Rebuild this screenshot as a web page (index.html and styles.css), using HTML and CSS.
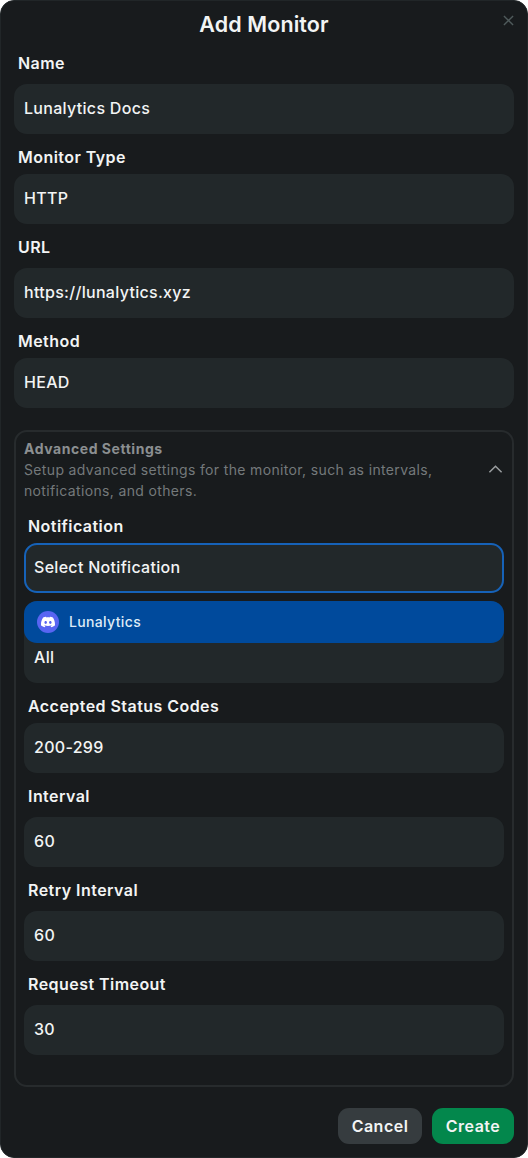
FILE: index.html
```html
<!DOCTYPE html>
<html>
<head>
  <meta charset="UTF-8">
  <title>Add Monitor</title>
  <link rel="stylesheet" href="styles.css">
</head>
<body>
  <div class="modal">
    <header class="modal-header">
      <h1>Add Monitor</h1>
      <svg class="close-icon" viewBox="0 0 12 12" aria-hidden="true">
        <path d="M1 1l10 10M11 1L1 11"/>
      </svg>
    </header>

    <div class="field">
      <label class="field-label gap-wide">Name</label>
      <div class="input">Lunalytics Docs</div>
    </div>
    <div class="field">
      <label class="field-label">Monitor Type</label>
      <div class="input">HTTP</div>
    </div>
    <div class="field">
      <label class="field-label gap-wide">URL</label>
      <div class="input">https://lunalytics.xyz</div>
    </div>
    <div class="field">
      <label class="field-label">Method</label>
      <div class="input">HEAD</div>
    </div>

    <section class="advanced">
      <div class="advanced-header">
        <div>
          <div class="advanced-title">Advanced Settings</div>
          <div class="advanced-desc">Setup advanced settings for the monitor, such as intervals, notifications, and others.</div>
        </div>
        <svg class="chevron" viewBox="0 0 16 10" aria-hidden="true">
          <path d="M1.5 8.5L8 2l6.5 6.5"/>
        </svg>
      </div>

      <div class="advanced-fields">
        <div class="field">
          <label class="field-label">Notification</label>
          <div class="input input-focus">Select Notification</div>
          <div class="dropdown">
            <div class="dropdown-item active">
              <span class="discord-badge">
                <svg viewBox="0 0 24 24" aria-hidden="true">
                  <path d="M20.317 4.3698a19.7913 19.7913 0 00-4.8851-1.5152.0741.0741 0 00-.0785.0371c-.211.3753-.4447.8648-.6083 1.2495-1.8447-.2762-3.68-.2762-5.4868 0-.1636-.3933-.4058-.8742-.6177-1.2495a.077.077 0 00-.0785-.037 19.7363 19.7363 0 00-4.8852 1.515.0699.0699 0 00-.0321.0277C.5334 9.0458-.319 13.5799.0992 18.0578a.0824.0824 0 00.0312.0561c2.0528 1.5076 4.0413 2.4228 5.9929 3.0294a.0777.0777 0 00.0842-.0276c.4616-.6304.8731-1.2952 1.226-1.9942a.076.076 0 00-.0416-.1057c-.6528-.2476-1.2743-.5495-1.8722-.8923a.077.077 0 01-.0076-.1277c.1258-.0943.2517-.1923.3718-.2914a.0743.0743 0 01.0776-.0105c3.9278 1.7933 8.18 1.7933 12.0614 0a.0739.0739 0 01.0785.0095c.1202.099.246.1981.3728.2924a.077.077 0 01-.0066.1276 12.2986 12.2986 0 01-1.873.8914.0766.0766 0 00-.0407.1067c.3604.698.7719 1.3628 1.225 1.9932a.076.076 0 00.0842.0286c1.961-.6067 3.9495-1.5219 6.0023-3.0294a.077.077 0 00.0313-.0552c.5004-5.177-.8382-9.6739-3.5485-13.6604a.061.061 0 00-.0312-.0286zM8.02 15.3312c-1.1825 0-2.1569-1.0857-2.1569-2.419 0-1.3332.9555-2.4189 2.157-2.4189 1.2108 0 2.1757 1.0952 2.1568 2.419 0 1.3332-.9555 2.4189-2.1569 2.4189zm7.9748 0c-1.1825 0-2.1569-1.0857-2.1569-2.419 0-1.3332.9554-2.4189 2.1569-2.4189 1.2108 0 2.1757 1.0952 2.1568 2.419 0 1.3332-.946 2.4189-2.1568 2.4189Z"/>
                </svg>
              </span>
              Lunalytics
            </div>
            <div class="dropdown-item">All</div>
          </div>
        </div>
        <div class="field">
          <label class="field-label">Accepted Status Codes</label>
          <div class="input">200-299</div>
        </div>
        <div class="field">
          <label class="field-label gap-wide">Interval</label>
          <div class="input">60</div>
        </div>
        <div class="field">
          <label class="field-label gap-wide">Retry Interval</label>
          <div class="input">60</div>
        </div>
        <div class="field">
          <label class="field-label gap-wide">Request Timeout</label>
          <div class="input">30</div>
        </div>
      </div>
    </section>

    <footer class="modal-footer">
      <button class="btn btn-cancel">Cancel</button>
      <button class="btn btn-create">Create</button>
    </footer>
  </div>
</body>
</html>
```

FILE: styles.css
```css
:root {
  --bg: #181b1d;
  --field: #22282a;
  --text: #f2f4f4;
  --blue: #004a9c;
}

html, body {
  margin: 0;
  padding: 0;
  background-color: #fff;
}

body {
  font-family: Inter, "Noto Sans", sans-serif;
  color: var(--text);
}

.modal {
  box-sizing: border-box;
  width: 528px;
  height: 1158px;
  padding: 0 13px;
  background-color: var(--bg);
  border: 1px solid #212628;
  border-radius: 14px;
}

.modal-header {
  position: relative;
  height: 52px;
  text-align: center;
}

h1 {
  margin: 0;
  padding-top: 10px;
  font-size: 21.5px;
  line-height: 26px;
  font-weight: 600;
  letter-spacing: 0.1px;
}

.close-icon {
  position: absolute;
  top: 14px;
  right: 0;
  width: 11px;
  height: 11px;
  fill: none;
  stroke: #4f5a5b;
  stroke-width: 1.5;
}

.field {
  margin-bottom: 13px;
}

.field-label {
  display: block;
  height: 21px;
  margin: 0 0 6px 4px;
  font-size: 16px;
  line-height: 20px;
  font-weight: 600;
  letter-spacing: 0.45px;
}

.field-label.gap-wide {
  margin-bottom: 10px;
}

.input {
  box-sizing: border-box;
  height: 50px;
  padding: 0 10px;
  background-color: var(--field);
  border-radius: 13px;
  font-size: 16px;
  line-height: 48px;
  font-weight: 500;
  letter-spacing: 0.3px;
}

.input-focus {
  padding: 0 8px;
  border: 2px solid #1662b8;
  line-height: 44px;
}

.advanced {
  box-sizing: border-box;
  height: 657px;
  margin-top: 22px;
  padding: 8px 8px 0;
  border: 2px solid #272b2d;
  border-radius: 13px;
}

.advanced-header {
  display: flex;
  align-items: center;
  justify-content: space-between;
  gap: 10px;
}

.advanced-title {
  font-size: 14px;
  line-height: 17px;
  font-weight: 700;
  letter-spacing: 0.55px;
  color: #8b8f91;
}

.advanced-desc {
  width: 430px;
  margin-top: 2px;
  font-size: 14px;
  line-height: 21px;
  letter-spacing: 0.35px;
  color: #74797b;
}

.chevron {
  flex: none;
  width: 15px;
  height: 10px;
  margin: 0 1px 4px 0;
  fill: none;
  stroke: #9a9ea0;
  stroke-width: 1.6;
}

.advanced-fields {
  margin-top: 15px;
}

.dropdown {
  margin-top: 8px;
  height: 82px;
  background-color: var(--field);
  border-radius: 13px;
}

.dropdown-item {
  padding: 0 10px;
  font-size: 16px;
  line-height: 28px;
  font-weight: 500;
  letter-spacing: 0.3px;
}

.dropdown-item.active {
  display: flex;
  align-items: center;
  gap: 10px;
  height: 42px;
  padding: 0 13px;
  background-color: var(--blue);
  border-radius: 13px;
  font-size: 14px;
  letter-spacing: 0.35px;
  color: #dfeaf6;
}

.discord-badge {
  display: flex;
  align-items: center;
  justify-content: center;
  width: 22px;
  height: 22px;
  border-radius: 50%;
  background-color: #5865f2;
}

.discord-badge svg {
  width: 14px;
  height: 14px;
  fill: #fff;
}

.modal-footer {
  display: flex;
  justify-content: flex-end;
  gap: 10px;
  margin-top: 21px;
}

.btn {
  height: 36px;
  padding: 0;
  border: none;
  border-radius: 11px;
  font-family: inherit;
  font-size: 16px;
  font-weight: 600;
  letter-spacing: 0.5px;
  color: #f2f4f4;
}

.btn-cancel {
  width: 84px;
  background-color: #363c3f;
}

.btn-create {
  width: 82px;
  background-color: #03874c;
}
```
